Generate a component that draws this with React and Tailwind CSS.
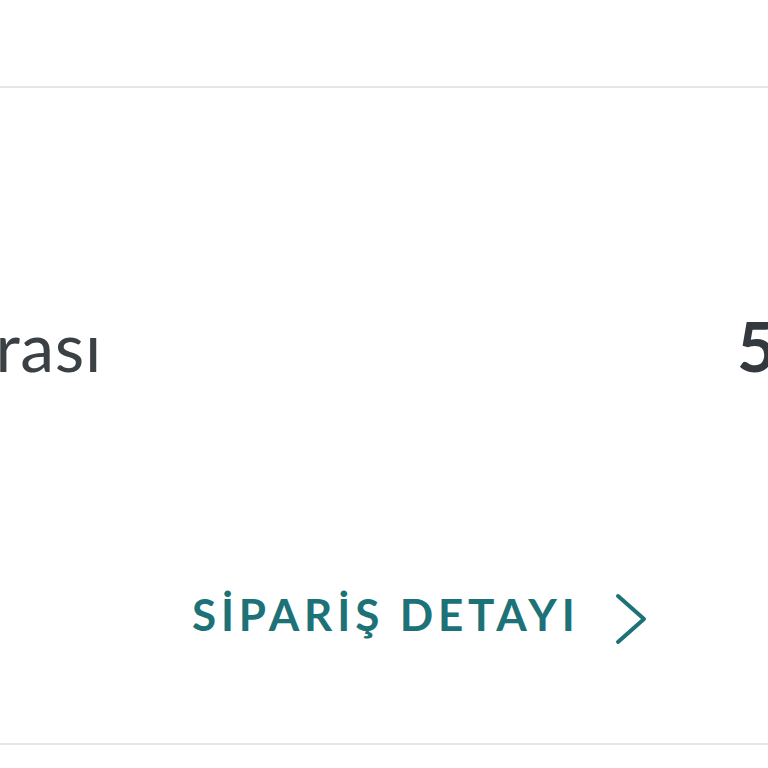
export default function App() {
  return (
    <div className="h-screen w-full overflow-hidden bg-white" style={{ fontFamily: 'Lato, "Noto Sans", sans-serif' }}>
      <div className="pt-[86px]">
        {/* order card */}
        <div className="border-y-2 border-[#e3e7e7] h-[659px] flex flex-col">
          <div className="flex items-start pt-[224px]">
            <div className="w-[102px] shrink-0 flex justify-end whitespace-nowrap">
              <span className="text-[68px] leading-none tracking-[0.01em] text-[#3b4045]">Sipariş Numarası</span>
            </div>
            <div className="ml-[635px] whitespace-nowrap">
              <span className="text-[68px] leading-none font-bold text-[#33393e]">5104832</span>
            </div>
          </div>
          <div className="mt-[212px] flex items-start pl-[192px]">
            <span className="text-[44px] leading-none font-bold tracking-[0.11em] text-[#1d7278]">SİPARİŞ DETAYI</span>
            <svg className="ml-[35px] mt-[1px]" width="32" height="52" viewBox="0 0 32 52" fill="none">
              <polyline points="3,3 29,26 3,49" stroke="#1d7278" strokeWidth="4" strokeLinecap="round" strokeLinejoin="round" />
            </svg>
          </div>
        </div>
      </div>
    </div>
  );
}
